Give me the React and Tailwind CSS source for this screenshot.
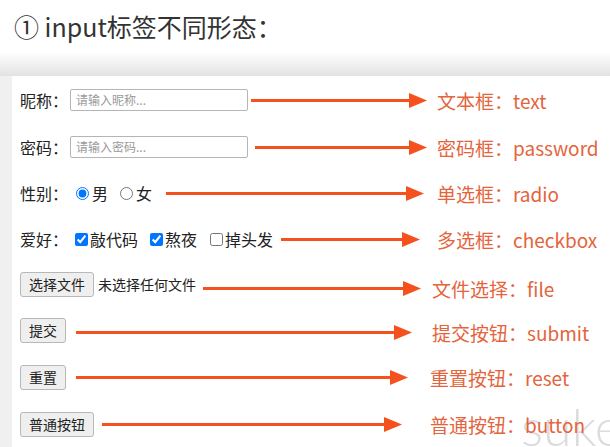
import React from "react";

const CJK = { fontFamily: '"Noto Sans CJK SC", "Noto Sans", sans-serif' };

function Arrow({ ml, mr, dy = 0 }) {
  return (
    <div
      className="flex-1 flex items-center"
      style={{ marginLeft: ml, marginRight: mr, marginTop: dy }}
    >
      <div className="flex-1 h-[3px] bg-[#f4511e]" />
      <svg width="18" height="15" viewBox="0 0 18 15" className="shrink-0 -ml-px">
        <polygon points="0,0 18,7.5 0,15" fill="#f4511e" />
      </svg>
    </div>
  );
}

function Label({ w, children, dy = 0 }) {
  return (
    <span
      className="shrink-0 text-[19px] leading-none text-[#e4643c] whitespace-nowrap"
      style={{ width: w, marginTop: dy }}
    >
      {children}
    </span>
  );
}

function TextInput({ placeholder }) {
  return (
    <div className="w-[178px] h-[22px] border border-[#b5b5b5] rounded-[2px] flex items-center px-[5px] text-[12px] text-[#9a9a9a]">
      {placeholder}
    </div>
  );
}

function Btn({ children }) {
  return (
    <div className="h-[25px] px-[8px] border border-[#b8b8b8] rounded-[3px] bg-[#efefef] flex items-center text-[14px] text-[#222] whitespace-nowrap">
      {children}
    </div>
  );
}

export default function App() {
  return (
    <div
      className="w-[610px] h-[447px] bg-white relative overflow-hidden text-[#222]"
      style={CJK}
    >
      <div
        className="absolute left-[521px] top-[400px] text-[52px] leading-none text-[#dcdcdc] font-light"
        style={{ fontFamily: "Lato, sans-serif" }}
      >
        suke
      </div>
      <div className="relative">
        <div className="h-[52px] pl-[14px] flex items-center text-[25px] text-[#333] leading-none">
          ① input标签不同形态：
        </div>
        <div className="h-[24px] bg-linear-to-b from-white/0 to-[#e2e2e2]" />
        <div className="flex">
          <div className="w-[12px] shrink-0 bg-[#f0f0f0]" />
          <div className="flex-1 flex flex-col pl-[8px] text-[16px]">
            {/* row 1 */}
            <div className="h-[48px] flex items-center">
              <span className="w-[50px] shrink-0">昵称：</span>
              <TextInput placeholder="请输入昵称..." />
              <Arrow ml="3px" mr="10px" />
              <Label w="173px">文本框：text</Label>
            </div>
            {/* row 2 */}
            <div className="h-[46px] flex items-center">
              <span className="w-[50px] shrink-0">密码：</span>
              <TextInput placeholder="请输入密码..." />
              <Arrow ml="7px" mr="10px" />
              <Label w="173px">密码框：password</Label>
            </div>
            {/* row 3 */}
            <div className="h-[46px] flex items-center">
              <span className="w-[56px] shrink-0">性别：</span>
              <input type="radio" name="sex" defaultChecked className="w-[13px] h-[13px] accent-[#0075ff]" />
              <span className="ml-[3px]">男</span>
              <input type="radio" name="sex" className="w-[13px] h-[13px] ml-[12px]" />
              <span className="ml-[3px]">女</span>
              <Arrow ml="14px" mr="13px" />
              <Label w="173px">单选框：radio</Label>
            </div>
            {/* row 4 */}
            <div className="h-[46px] flex items-center">
              <span className="w-[55px] shrink-0">爱好：</span>
              <input type="checkbox" defaultChecked className="w-[13px] h-[13px] accent-[#0075ff]" />
              <span className="ml-[2px]">敲代码</span>
              <input type="checkbox" defaultChecked className="w-[13px] h-[13px] ml-[12px] accent-[#0075ff]" />
              <span className="ml-[2px]">熬夜</span>
              <input type="checkbox" className="w-[13px] h-[13px] ml-[13px]" />
              <span className="ml-[2px]">掉头发</span>
              <Arrow ml="8px" mr="17px" />
              <Label w="173px">多选框：checkbox</Label>
            </div>
            {/* row 5 */}
            <div className="h-[44px] flex items-center">
              <Btn>选择文件</Btn>
              <span className="ml-[4px] text-[14px]">未选择任何文件</span>
              <Arrow ml="7px" mr="11px" dy="8px" />
              <Label w="178px" dy="8px">文件选择：file</Label>
            </div>
            {/* row 6 */}
            <div className="h-[48px] flex items-center">
              <Btn>提交</Btn>
              <Arrow ml="10px" mr="20px" dy="4px" />
              <Label w="178px" dy="4px">提交按钮：submit</Label>
            </div>
            {/* row 7 */}
            <div className="h-[46px] flex items-center">
              <Btn>重置</Btn>
              <Arrow ml="10px" mr="22px" />
              <Label w="180px">重置按钮：reset</Label>
            </div>
            {/* row 8 */}
            <div className="h-[48px] flex items-center">
              <Btn>普通按钮</Btn>
              <Arrow ml="8px" mr="28px" />
              <Label w="180px">普通按钮：button</Label>
            </div>
          </div>
        </div>
      </div>
    </div>
  );
}
